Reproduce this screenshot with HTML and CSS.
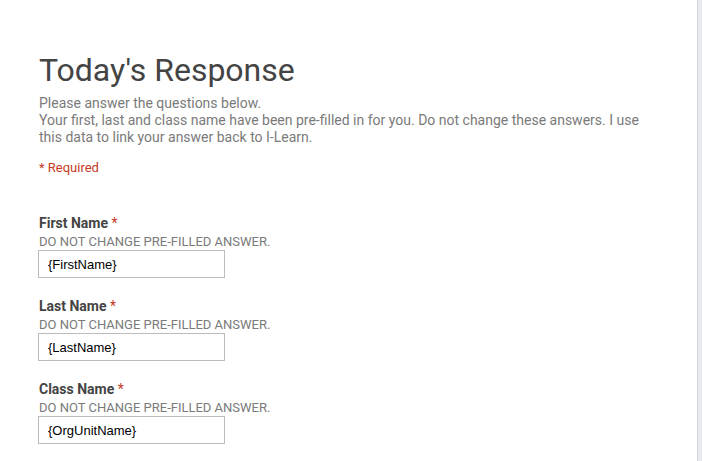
FILE: index.html
```html
<!DOCTYPE html>
<html>
<head>
<meta charset="utf-8">
<link rel="stylesheet" href="styles.css">
</head>
<body>
<div class="page">
  <div class="form">
    <h1 class="title">Today's Response</h1>
    <div class="desc">Please answer the questions below.<br>Your first, last and class name have been pre-filled in for you. Do not change these answers. I use this data to link your answer back to I-Learn.</div>
    <div class="required">* Required</div>
    <div class="fields">
      <div class="field">
        <div class="label">First Name <span class="star">*</span></div>
        <div class="help">DO NOT CHANGE PRE-FILLED ANSWER.</div>
        <input class="input" type="text" value="{FirstName}">
      </div>
      <div class="field">
        <div class="label">Last Name <span class="star">*</span></div>
        <div class="help">DO NOT CHANGE PRE-FILLED ANSWER.</div>
        <input class="input" type="text" value="{LastName}">
      </div>
      <div class="field">
        <div class="label">Class Name <span class="star">*</span></div>
        <div class="help">DO NOT CHANGE PRE-FILLED ANSWER.</div>
        <input class="input" type="text" value="{OrgUnitName}">
      </div>
    </div>
  </div>
</div>
</body>
</html>
```
FILE: styles.css
```css
html {
  background: #e8eaf0;
  height: 100%;
}
body {
  margin: 0;
  height: 100%;
  font-family: Roboto, "Liberation Sans", Arial, sans-serif;
}
.page {
  width: 697px;
  height: 100%;
  background: #fff;
  border-right: 1px solid #d4d6dc;
  box-sizing: content-box;
}
.form {
  padding: 49px 0 0 39px;
  width: 605px;
}
.title {
  margin: 0;
  font-size: 32px;
  font-weight: 400;
  line-height: 42px;
  color: #444;
}
.desc {
  margin-top: 4px;
  font-size: 14px;
  line-height: 17px;
  color: #7a7a7a;
}
.required {
  margin-top: 13px;
  font-size: 13px;
  line-height: 17px;
  color: #c43b1d;
}
.fields {
  display: flex;
  flex-direction: column;
  gap: 19px;
  margin-top: 38px;
}
.field {
  display: flex;
  flex-direction: column;
  align-items: flex-start;
}
.label {
  font-size: 14px;
  font-weight: 700;
  line-height: 18px;
  color: #444;
}
.star {
  color: #c43b1d;
  font-weight: 400;
}
.help {
  font-size: 13px;
  line-height: 16px;
  color: #7a7a7a;
  margin-top: 2px;
}
.input {
  margin: 0 0 0 -1px;
  width: 187px;
  height: 28px;
  box-sizing: border-box;
  border: 1px solid #bbb;
  padding: 0 9px;
  font-family: "Liberation Sans", Arial, sans-serif;
  font-size: 13px;
  color: #000;
  background: #fff;
  outline: none;
}
```
